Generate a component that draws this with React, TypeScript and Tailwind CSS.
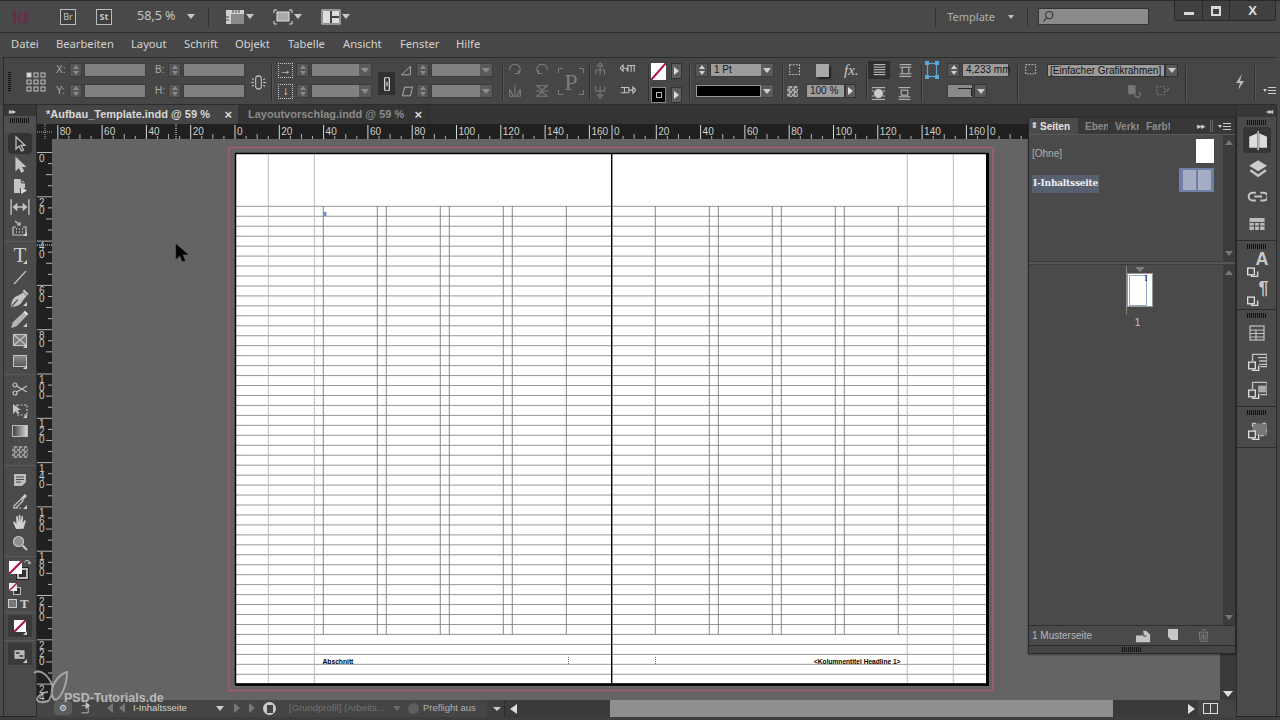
import React from 'react';

const mm = 2.215;
const hLines = Array.from({ length: 48 }, (_, i) => 206.3 + i * 9.957);
const colsLeft = [323.3, 377.3, 386.3, 440.3, 449.3, 503.3, 512.3, 566.3];
const colsRight = [655.3, 709.3, 718.3, 772.3, 781.3, 835.3, 844.3, 898.3];
const guides = [268.3, 314.3, 907.3, 953.3];

type IconProps = { children: React.ReactNode; size?: number; className?: string };

function Ico({ children, size = 18, className = '' }: IconProps) {
  return (
    <svg width={size} height={size} viewBox="0 0 18 18" fill="none" stroke="#c4c4c4" strokeWidth="1.2" className={className}>
      {children}
    </svg>
  );
}

function Grip({ w = 'w-[20px]' }: { w?: string }) {
  return <div className={`${w} h-[5px] bg-[repeating-linear-gradient(90deg,#111_0,#111_1px,transparent_1px,transparent_2px)]`} />;
}

function Corner() {
  return <span className="absolute right-[5px] bottom-[2px] w-0 h-0 border-l-[4px] border-l-transparent border-b-[4px] border-b-[#cfcfcf]" />;
}

function Tool({ children, fly, active }: { children: React.ReactNode; fly?: boolean; active?: boolean }) {
  return (
    <div className={`relative h-[21px] w-[24px] mx-auto flex items-center justify-center ${active ? 'bg-[#333] rounded-sm' : ''}`}>
      {children}
      {fly && <Corner />}
    </div>
  );
}

function Sep({ h = 'h-[7px]' }: { h?: string }) {
  return (
    <div className={`${h} flex items-center`}>
      <div className="w-full h-px bg-[#2f2f2f] border-b border-b-[#5a5a5a]" />
    </div>
  );
}

function Spin({ dim }: { dim?: boolean }) {
  const c = dim ? '#8a8a8a' : '#d0d0d0';
  return (
    <div className="w-[13px] h-[14px] bg-[#565656] border border-[#3a3a3a] flex flex-col items-center justify-center gap-[2px] shrink-0">
      <span className="w-0 h-0 border-x-[3px] border-x-transparent border-b-[4px]" style={{ borderBottomColor: c }} />
      <span className="w-0 h-0 border-x-[3px] border-x-transparent border-t-[4px]" style={{ borderTopColor: c }} />
    </div>
  );
}

function Field({ w, drop, text, lit }: { w: string; drop?: boolean; text?: string; lit?: boolean }) {
  return (
    <div className={`${w} h-[14px] ${lit ? 'bg-[#9c9c9c]' : 'bg-[#808080]'} border border-[#3c3c3c] flex items-center relative shrink-0`}>
      {text && <span className="pl-[3px] text-[10px] leading-none text-[#161616] whitespace-nowrap">{text}</span>}
      {drop && (
        <span className="absolute right-0 top-0 h-full w-[12px] bg-[#5a5a5a] flex items-center justify-center">
          <span className={`w-0 h-0 border-x-[4px] border-x-transparent border-t-[5px] ${lit ? 'border-t-[#d0d0d0]' : 'border-t-[#8c8c8c]'}`} />
        </span>
      )}
    </div>
  );
}

function VBar() {
  return <div className="w-px h-[36px] bg-[#2f2f2f] border-r border-r-[#565656] box-content shrink-0" />;
}

function RulerH() {
  const origins = [
    { x: 235, from: -80, to: 165 },
    { x: 612, from: 0, to: 165 },
    { x: 988, from: 0, to: 110 },
  ];
  const items: React.ReactNode[] = [];
  origins.forEach((o) => {
    for (let m = o.from; m <= o.to; m += 5) {
      const x = o.x + m * mm - 52;
      if (x < 0) continue;
      const major = m % 20 === 0;
      const mid = m % 10 === 0;
      items.push(
        <line key={`${o.x}-${m}`} x1={x} x2={x} y1={major ? 1 : mid ? 10 : 12} y2={15} stroke={major ? '#d8d8d8' : '#b0b0b0'} strokeWidth="1" />
      );
      if (major) {
        items.push(
          <text key={`${o.x}-t${m}`} x={x + 2} y={10.5} fontSize="10" fontFamily="'Liberation Sans', sans-serif" fill="#cfcfc4">
            {Math.abs(m)}
          </text>
        );
      }
    }
  });
  return (
    <svg width="1184" height="15" className="block bg-[#202020]">
      {items}
      <line x1="124" x2="124" y1="0" y2="15" stroke="#eee" strokeDasharray="1 1" />
    </svg>
  );
}

function RulerV() {
  const items: React.ReactNode[] = [];
  for (let m = 0; m <= 240; m += 5) {
    const y = 13.5 + m * mm;
    const major = m % 20 === 0;
    const mid = m % 10 === 0;
    items.push(<line key={m} x1={major ? 0 : mid ? 9 : 11} x2={15} y1={y} y2={y} stroke="#b8b8b8" strokeWidth="1" />);
    if (major) {
      String(m).split('').forEach((d, i) => {
        items.push(
          <text key={`${m}-${i}`} x={2} y={y + 9 + i * 8} fontSize="10" fontFamily="'Liberation Sans', sans-serif" fill={i === String(m).length - 1 ? '#ccd2b4' : '#c8c8d4'}>
            {d}
          </text>
        );
      });
    }
  }
  return (
    <svg width="15" height="561" className="block bg-[#202020] shrink-0">
      {items}
      <line x1="0" x2="15" y1="106" y2="106" stroke="#eee" strokeDasharray="1 1" />
    </svg>
  );
}

function Spread() {
  const ox = 228;
  const oy = 146;
  return (
    <svg width="770" height="548" viewBox={`${ox} ${oy} 770 548`} className="block">
      <rect x="229" y="147.5" width="764" height="543" fill="none" stroke="#a45a75" strokeWidth="1.6" />
      <rect x="235.5" y="153.5" width="752" height="531" fill="#fff" />
      {hLines.map((y) => (
        <line key={y} x1="236" x2="987" y1={y} y2={y} stroke="#8a8a8a" strokeWidth="0.9" />
      ))}
      {guides.map((x) => (
        <line key={x} x1={x} x2={x} y1="154" y2="684" stroke="#b6b6b6" strokeWidth="0.9" />
      ))}
      {[...colsLeft, ...colsRight].map((x) => (
        <line key={x} x1={x} x2={x} y1="206" y2="634.5" stroke="#7c7c7c" strokeWidth="0.9" />
      ))}
      <rect x="323" y="212" width="3.4" height="4" fill="#6f8fcf" />
      <rect x="235.5" y="153.5" width="752" height="531" fill="none" stroke="#000" strokeWidth="1.5" />
      <line x1="987.5" x2="987.5" y1="153" y2="686" stroke="#000" strokeWidth="3" />
      <line x1="235" x2="989" y1="684.5" y2="684.5" stroke="#000" strokeWidth="2.6" />
      <line x1="611.7" x2="611.7" y1="153" y2="685" stroke="#000" strokeWidth="1.4" />
      <line x1="568.5" x2="568.5" y1="657" y2="664" stroke="#777" strokeDasharray="1 1" />
      <line x1="655.5" x2="655.5" y1="657" y2="664" stroke="#777" strokeDasharray="1 1" />
      <text x="322.5" y="664" fontSize="6.7" fontWeight="700" fontFamily="'Liberation Sans', sans-serif" fill="#000">Abschnitt</text>
      <text x="814" y="664" fontSize="6.6" fontWeight="700" fontFamily="'Liberation Sans', sans-serif" fill="#000">&lt;Kolumnentitel Headline 1&gt;</text>
    </svg>
  );
}

function ToolPanel() {
  return (
    <div className="w-[37px] shrink-0 flex">
      <div className="w-[3px] bg-[#4c4c4c]" />
      <div className="w-[33px] border-l border-r border-[#2c2c2c] bg-[#4a4a4a] flex flex-col box-content">
        <div className="h-[11px] bg-[#383838] flex items-center pl-[5px]">
          <span className="text-[8px] leading-none text-[#ccc] tracking-[-1px]">▸▸</span>
        </div>
        <div className="h-[17px] flex justify-center pt-[2px] bg-[#4f4f4f]"><Grip /></div>
        <Tool active>
          <Ico><path d="M5 2v12l3-3 2.5 5 2-1-2.5-4.6H14z" /></Ico>
        </Tool>
        <Tool>
          <Ico><path d="M5 2v12l3-3 2.5 5 2-1-2.5-4.6H14z" fill="#c4c4c4" /></Ico>
        </Tool>
        <Tool>
          <Ico><path d="M3 2h7l4 4v5H9v5H3z" fill="#c4c4c4" stroke="none" /><path d="M10 2l1 4h3" stroke="#4a4a4a" /><path d="M10 10l6 3.5-6 3.5z" fill="#ddd" stroke="none" /></Ico>
        </Tool>
        <Tool>
          <Ico size={20}><path d="M1 2v14M17 2v14M4 9h10" /><path d="M6 6.5L3.2 9 6 11.5zM12 6.5L14.8 9 12 11.5z" fill="#c4c4c4" /></Ico>
        </Tool>
        <Tool fly>
          <Ico><path d="M2 8v8h13V8h-3M2 8h3" /><path d="M4 2l5 4M9 3v3H6" /><path d="M5 10h1M8 10h1M11 10h1M5 13h1M8 13h1M11 13h1" strokeWidth="1.6" /></Ico>
        </Tool>
        <Sep />
        <Tool fly><span className="font-['Liberation_Serif',serif] text-[21px] leading-none text-[#cfcfcf]">T</span></Tool>
        <Tool><Ico><path d="M3 16L15 3" /></Ico></Tool>
        <Tool fly>
          <Ico size={20}><path d="M1 17c0-5 2-9 6-10l5-3 3 3-4 5c-1 3-5 5-10 5z" fill="#c4c4c4" stroke="none" /><path d="M12 2l4 4" strokeWidth="2" /><path d="M1.5 16.5L7 10.5" stroke="#4a4a4a" /></Ico>
        </Tool>
        <Tool fly>
          <Ico size={20}><path d="M1 17l1.5-5L12 3l3 3-9 9.5z" fill="#b4b4b4" stroke="none" /><path d="M12 3l3 3 1.5-1.5L13.5 1.5z" fill="#e8e8e8" stroke="none" /></Ico>
        </Tool>
        <Tool fly><Ico><rect x="2.5" y="3.5" width="13" height="11" fill="#777" /><path d="M2.5 3.5l13 11M15.5 3.5l-13 11" /></Ico></Tool>
        <Tool fly><div className="w-[14px] h-[12px] border border-[#c4c4c4] bg-gradient-to-b from-[#8a8a8a] to-[#5c5c5c]" /></Tool>
        <Sep />
        <Tool>
          <Ico><circle cx="4" cy="5" r="2" /><circle cx="4" cy="13" r="2" /><path d="M5.5 6L16 12M5.5 12L16 6" /></Ico>
        </Tool>
        <Tool fly>
          <Ico><path d="M2 3v10l3-3 2 3 1.5-1-2-3H10z" fill="#c4c4c4" stroke="none" /><rect x="6" y="4" width="10" height="10" strokeDasharray="2 1.5" /></Ico>
        </Tool>
        <Tool><div className="w-[16px] h-[12px] border border-[#bbb] bg-gradient-to-r from-[#444] to-[#d8d8d8]" /></Tool>
        <Tool>
          <div className="w-[16px] h-[12px] bg-[repeating-conic-gradient(#999_0_25%,#5a5a5a_0_50%)] bg-[length:5px_5px]" />
        </Tool>
        <Sep />
        <Tool>
          <Ico><path d="M3 3h12v8l-4 4H3z" fill="#bdbdbd" stroke="none" /><path d="M5 6h8M5 8.5h8M5 11h5" stroke="#4a4a4a" /></Ico>
        </Tool>
        <Tool fly>
          <Ico><path d="M3 14l7-7 2 2-7 7H3z" /><path d="M10 6l4-4 2 2-4 4z" fill="#ccc" stroke="none" /><path d="M2 16h9" strokeDasharray="2 1" /></Ico>
        </Tool>
        <Tool>
          <Ico><path d="M5 16L2 9l1.2-.8L5.5 11 5 3.5 6.5 3l1 6 .3-7h1.5l.3 7 1-6 1.5.5-.5 6.5 2-3 1.2.8-2.3 8z" fill="#d0d0d0" stroke="none" /></Ico>
        </Tool>
        <Tool>
          <Ico><circle cx="7.5" cy="7.5" r="5" fill="#8e8e8e" /><path d="M11.5 11.5L16 16" strokeWidth="2.4" /></Ico>
        </Tool>
        <Sep />
        <div className="relative h-[22px]">
          <div className="absolute left-[13px] top-[8px] w-[11px] h-[11px] border-2 border-[#bbb] bg-[#333] outline outline-1 outline-[#222]" />
          <svg width="13" height="13" viewBox="0 0 13 13" className="absolute left-[5px] top-[1px]"><rect width="13" height="13" fill="#fff" /><path d="M0 13L13 0" stroke="#b01040" strokeWidth="2" /></svg>
          <span className="absolute left-[20px] top-[-2px] text-[9px] leading-none text-[#ccc]">↷</span>
        </div>
        <div className="relative h-[14px]">
          <div className="absolute left-[9px] top-[5px] w-[8px] h-[8px] border border-[#bbb] bg-[#333]" />
          <svg width="8" height="8" viewBox="0 0 8 8" className="absolute left-[5px] top-[1px]"><rect width="8" height="8" fill="#eee" /><path d="M0 8L8 0" stroke="#b01040" strokeWidth="1.4" /></svg>
        </div>
        <div className="h-[14px] flex items-center pl-[4px] gap-[3px]">
          <div className="w-[9px] h-[9px] border border-[#ccc] bg-[#777]" />
          <span className="font-['Liberation_Serif',serif] font-bold text-[13px] leading-none text-[#d0d0d0]">T</span>
        </div>
        <Sep h="h-[5px]" />
        <div className="relative h-[22px] w-[24px] mx-auto bg-[#3a3a3a] flex items-center justify-center">
          <svg width="12" height="12" viewBox="0 0 12 12"><rect width="12" height="12" fill="#fff" /><path d="M0 12L12 0" stroke="#b01040" strokeWidth="2" /></svg>
          <Corner />
        </div>
        <Sep h="h-[6px]" />
        <div className="relative h-[22px] w-[24px] mx-auto bg-[#3a3a3a] flex items-center justify-center">
          <Ico size={13}><rect x="2" y="3" width="14" height="12" fill="#bbb" stroke="none" /><path d="M4 7h5M9 11h5" stroke="#333" strokeWidth="2" /></Ico>
          <Corner />
        </div>
      </div>
    </div>
  );
}

function DockIcon({ children, active }: { children: React.ReactNode; active?: boolean }) {
  return (
    <div className={`h-[26px] w-[28px] mx-auto flex items-center justify-center ${active ? 'bg-[#363636] rounded-[3px]' : ''}`}>
      {children}
    </div>
  );
}

function Dup({ children }: { children: React.ReactNode }) {
  return (
    <Ico size={20}>
      {children}
      <rect x="1.5" y="10" width="6" height="6" stroke="#ddd" fill="#4a4a4a" />
      <path d="M5 16.5v1h5.5V13" stroke="#ddd" />
    </Ico>
  );
}

function Dock() {
  return (
    <div className="w-[39px] shrink-0 bg-[#4a4a4a] border-l border-l-[#2c2c2c] border-r border-r-[#2c2c2c] box-content mr-[3px] flex flex-col">
      <div className="h-[12px] bg-[#383838] flex items-center justify-end pr-[4px]">
        <span className="text-[8px] leading-none text-[#ccc] tracking-[-1px]">◂◂</span>
      </div>
      <div className="pt-[3px] h-[124px] border-b border-b-[#2c2c2c]">
        <div className="flex justify-center"><Grip /></div>
        <div className="mt-[2px] flex flex-col gap-[2px]">
          <DockIcon active>
            <Ico size={20}><path d="M2 6l7-3v13H2zM18 6l-7-3v13h7z" fill="#ddd" stroke="none" /><path d="M10 1v17" stroke="#ddd" /></Ico>
          </DockIcon>
          <DockIcon>
            <Ico size={20}><path d="M10 2l8 5-8 5-8-5z" fill="#ccc" stroke="none" /><path d="M3 11l7 5 7-5" strokeWidth="2.2" /></Ico>
          </DockIcon>
          <DockIcon>
            <Ico size={20}><path d="M8 6H5a3.5 3.5 0 000 7h3M12 6h3a3.5 3.5 0 010 7h-3M6.5 9.5h7" strokeWidth="1.8" /></Ico>
          </DockIcon>
          <DockIcon>
            <Ico size={18}><rect x="1.5" y="3" width="15" height="12" fill="#bbb" stroke="none" /><path d="M1.5 7.5h15M1.5 11h15M6.5 7v8M11.5 7v8" stroke="#4a4a4a" /></Ico>
          </DockIcon>
        </div>
      </div>
      <div className="pt-[3px] h-[69px] border-b border-b-[#2c2c2c]">
        <div className="flex justify-center"><Grip /></div>
        <div className="mt-[1px] flex flex-col gap-[3px]">
          <DockIcon>
            <div className="relative w-[22px] h-[24px]">
              <div className="absolute left-0 bottom-[-2px]"><Dup><path d="" /></Dup></div>
              <span className="absolute right-[-1px] top-[-1px] text-[18px] font-bold leading-none text-[#c8c8c8] font-['Liberation_Sans',sans-serif]">A</span>
            </div>
          </DockIcon>
          <DockIcon>
            <div className="relative w-[22px] h-[24px]">
              <div className="absolute left-0 bottom-[-2px]"><Dup><path d="" /></Dup></div>
              <span className="absolute right-[-1px] top-[-1px] text-[18px] font-bold leading-none text-[#c8c8c8] font-['Liberation_Sans',sans-serif]">¶</span>
            </div>
          </DockIcon>
        </div>
      </div>
      <div className="pt-[3px] h-[97px] border-b border-b-[#2c2c2c]">
        <div className="flex justify-center"><Grip /></div>
        <div className="mt-[2px] flex flex-col gap-[2px]">
          <DockIcon>
            <Ico size={18}><rect x="2" y="2" width="14" height="14" /><path d="M2 6h14M2 9.5h14M2 13h14M8 6v10" /></Ico>
          </DockIcon>
          <DockIcon>
            <Dup><path d="M5 9V3h13v11h-6M10 6h8M11 9h7M11 12h7" /></Dup>
          </DockIcon>
          <DockIcon>
            <Dup><path d="M5 9V3h13v11h-6" /><rect x="10" y="6" width="7" height="6" fill="#aaa" stroke="none" /></Dup>
          </DockIcon>
        </div>
      </div>
      <div className="pt-[3px] h-[41px] border-b border-b-[#2c2c2c]">
        <div className="flex justify-center"><Grip /></div>
        <div className="mt-[2px]">
          <DockIcon>
            <Dup><rect x="5" y="3" width="13" height="11" fill="#777" strokeDasharray="3 6" /></Dup>
          </DockIcon>
        </div>
      </div>
    </div>
  );
}

function ScrollCol({ up, down, className }: { up?: boolean; down?: boolean; className?: string }) {
  return (
    <div className={`w-[12px] bg-[#3c3c3c] flex flex-col items-center justify-between py-[5px] shrink-0 ${className ?? ''}`}>
      {up ? <span className="w-0 h-0 border-x-[4px] border-x-transparent border-b-[5px] border-b-[#777]" /> : <span />}
      {down ? <span className="w-0 h-0 border-x-[4px] border-x-transparent border-t-[5px] border-t-[#777]" /> : <span />}
    </div>
  );
}

function PagesPanel() {
  return (
    <div className="absolute left-[1028px] top-[117px] w-[208px] h-[537px] bg-[#4a4a4a] border border-[#2a2a2a] flex flex-col shadow-[0_1px_2px_#0006] font-['Liberation_Sans',sans-serif]">
      <div className="h-[17px] bg-[#383838] flex items-stretch text-[10px] border-b border-b-[#5a5a5a] shrink-0">
        <div className="w-[49px] bg-[#4a4a4a] flex items-center pl-[2px] gap-[2px] font-bold text-[#e4e4e4]">
          <span className="text-[8px] leading-none">⇕</span>Seiten
        </div>
        <div className="w-[31px] flex items-center pl-[7px] text-[#8c8c8c] border-r border-r-[#2f2f2f] font-bold overflow-hidden whitespace-nowrap">Ebene</div>
        <div className="w-[31px] flex items-center pl-[6px] text-[#8c8c8c] border-r border-r-[#2f2f2f] font-bold overflow-hidden whitespace-nowrap">Verkn</div>
        <div className="w-[31px] flex items-center pl-[6px] text-[#8c8c8c] border-r border-r-[#2f2f2f] font-bold overflow-hidden whitespace-nowrap">Farbf</div>
        <div className="flex-1 flex items-center justify-end pr-[4px] gap-[5px] text-[#ccc]">
          <span className="text-[9px] leading-none tracking-[-1px]">▸▸</span>
          <span className="w-[3px] h-[12px] border-x border-x-[#666]" />
          <div className="flex items-center gap-[1px]">
            <span className="w-0 h-0 border-x-[2px] border-x-transparent border-t-[3px] border-t-[#ccc]" />
            <span className="w-[8px] h-[7px] border-y border-y-[#ccc] bg-[linear-gradient(#ccc,#ccc)] bg-[length:100%_1px] bg-center bg-no-repeat" />
          </div>
        </div>
      </div>
      <div className="h-[126px] flex shrink-0">
        <div className="flex-1 relative text-[10px]">
          <div className="flex items-start justify-between pl-[3px] pr-[9px] pt-[4px]">
            <span className="mt-[7px] text-[#b0b0b0]">[Ohne]</span>
            <div className="w-[18px] h-[24px] bg-white" />
          </div>
          <div className="flex items-start justify-between pl-[3px] pr-[9px] mt-[5px]">
            <span className="mt-[7px] px-px py-[2px] bg-[#56606f] font-bold text-[#eef0f4] font-['DejaVu_Serif',serif] text-[9px] tracking-[-.2px]">I-Inhaltsseite</span>
            <div className="w-[35px] h-[24px] bg-[#6f7ea6] flex items-center justify-center gap-[2px]">
              <div className="w-[13px] h-[20px] bg-[#a5adc4]" />
              <div className="w-[13px] h-[20px] bg-[#a5adc4]" />
            </div>
          </div>
        </div>
        <ScrollCol up down />
      </div>
      <div className="h-[4px] bg-[#555] border-y border-y-[#3c3c3c] shrink-0" />
      <div className="flex-1 flex min-h-0">
        <div className="flex-1 flex flex-col items-center pt-[2px] pl-[23px] text-[10px] text-[#c8c8c8]">
          <span className="w-0 h-0 border-x-[5px] border-x-transparent border-t-[5px] border-t-[#7e7e7e] mr-[-4px]" />
          <div className="relative mt-[1px] ml-[4px] w-[26px] h-[34px] bg-white border border-[#999]">
            <div className="w-[18px] h-[31px] ml-px mt-px border border-[#8fa8cc]" />
            <span className="absolute right-[4px] top-0 text-[9px] leading-none text-black font-['Liberation_Serif',serif]">I</span>
            <div className="absolute left-[-2px] top-[-8px] h-[48px] w-px bg-[#888]" />
          </div>
          <span className="mt-[8px]">1</span>
        </div>
        <ScrollCol up down />
      </div>
      <div className="h-[21px] border-t border-t-[#303030] border-b border-b-[#2a2a2a] bg-[#4a4a4a] flex items-center pl-[3px] text-[10px] text-[#b8b8b8] shrink-0 relative">
        <span>1 Musterseite</span>
        <div className="absolute left-[106px] top-[2px]">
          <Ico size={17}><path d="M1 8h7V3h4l4 4v8H1z" fill="#c4c4c4" stroke="none" /><path d="M8 3l1 5 3 1" stroke="#4a4a4a" /></Ico>
        </div>
        <div className="absolute left-[139px] top-[3px] w-[10px] h-[11px] bg-[#c8c8c8] [clip-path:polygon(0_0,100%_0,100%_100%,30%_100%,0_70%)]" />
        <div className="absolute left-[167px] top-[2px]">
          <Ico size={15}><path d="M3 5h12M7 2h4M4 5l1 11h8l1-11M7 7v7M9 7v7M11 7v7" stroke="#888" strokeWidth="1" /></Ico>
        </div>
        <div className="absolute right-[2px] bottom-[1px] w-[9px] h-[9px] bg-[radial-gradient(#111_40%,transparent_45%)] bg-[length:2px_2px] [clip-path:polygon(100%_0,100%_100%,0_100%)]" />
      </div>
      <div className="h-[7px] flex justify-center items-center bg-[#454545] shrink-0"><Grip /></div>
    </div>
  );
}

function StatusBar() {
  const tri = 'w-0 h-0 border-y-[5px] border-y-transparent';
  return (
    <div className="h-[17px] flex items-center bg-[#3e3e3e] text-[9.5px] font-['Liberation_Sans',sans-serif] shrink-0 relative">
      <div className="w-[450px] h-full flex items-center relative bg-[#454545]">
        <div className="absolute left-[17px] top-[1px] w-[18px] h-[14px] bg-[#5c5c5c] rounded-sm flex items-center justify-center text-[9px] leading-none text-[#ddd]">⚙</div>
        <div className="absolute left-[44px] top-[2px]"><Ico size={13}><path d="M1 5h9v10H1" /><path d="M7 9l5-4-5-4z" fill="#c4c4c4" /></Ico></div>
        <span className={`absolute left-[70px] top-[3px] ${tri} border-r-[6px] border-r-[#777]`} />
        <span className={`absolute left-[82px] top-[3px] ${tri} border-r-[6px] border-r-[#777]`} />
        <span className="absolute left-[96px] text-[#d0d0d0]">I-Inhaltsseite</span>
        <span className="absolute left-[179px] top-[6px] w-0 h-0 border-x-[4px] border-x-transparent border-t-[5px] border-t-[#ccc]" />
        <span className={`absolute left-[197px] top-[3px] ${tri} border-l-[6px] border-l-[#777]`} />
        <span className={`absolute left-[212px] top-[3px] ${tri} border-l-[6px] border-l-[#777]`} />
        <div className="absolute left-[226px] top-[2px] w-[13px] h-[13px] rounded-full bg-[#ccc] flex items-center justify-center">
          <span className="w-[6px] h-[8px] bg-[#444]" />
        </div>
        <span className="absolute left-[252px] text-[#737373]">[Grundprofil] (Arbeits...</span>
        <span className="absolute left-[356px] top-[6px] w-0 h-0 border-x-[4px] border-x-transparent border-t-[5px] border-t-[#6a6a6a]" />
        <div className="absolute left-[371px] top-[3px] w-[11px] h-[11px] rounded-full bg-[#5e5e5e]" />
        <span className="absolute left-[386px] text-[#b0b0b0]">Preflight aus</span>
        <span className="absolute left-[456px] top-[7px] w-0 h-0 border-x-[4px] border-x-transparent border-t-[4px] border-t-[#ccc]" />
      </div>
      <div className="w-[106px] h-full bg-[#3a3a3a] flex items-center pl-[5px] border-l border-l-[#2c2c2c] ml-[17px]">
        <span className={`${tri} border-r-[7px] border-r-[#ddd]`} />
      </div>
      <div className="w-[503px] h-full bg-[#8f8f8f]" />
      <div className="w-[85px] h-full bg-[#3a3a3a] flex items-center justify-end pr-[3px]">
        <span className={`${tri} border-l-[7px] border-l-[#ddd]`} />
      </div>
      <div className="flex-1 h-full flex items-center pl-[5px] gap-[6px] bg-[#444]">
        <div className="w-[15px] h-[11px] border border-[#ddd] bg-[linear-gradient(#ddd,#ddd)] bg-[length:1px_100%] bg-center bg-no-repeat" />
        <div className="w-[9px] h-[9px] bg-[radial-gradient(#aaa_40%,transparent_45%)] bg-[length:2px_2px] [clip-path:polygon(100%_0,100%_100%,0_100%)]" />
      </div>
    </div>
  );
}

function TitleBar() {
  const viewIcon = (child: React.ReactNode, ml: string) => (
    <div className={`${ml} flex items-center gap-[1px] shrink-0`}>
      <svg width="20" height="16" viewBox="0 0 20 16" fill="none">{child}</svg>
      <span className="w-0 h-0 border-x-[4px] border-x-transparent border-t-[5px] border-t-[#c8c8c8]" />
    </div>
  );
  return (
    <div className="h-[33px] bg-[#494949] border-t border-t-[#2a2a2a] border-b border-b-[#2e2e2e] flex items-center relative font-['Noto_Sans',sans-serif] text-[#c4c4c4]">
      <span className="ml-[12px] w-[20px] text-[19px] font-bold leading-none text-[#6b2c4c] font-['Liberation_Sans',sans-serif]">Id</span>
      <span className="ml-[28px] w-[16px] h-[16px] border border-[#bdbdbd] bg-[#3e3e3e] flex items-center justify-center text-[9px] leading-none">Br</span>
      <span className="ml-[20px] w-[16px] h-[16px] border border-[#bdbdbd] bg-[#3e3e3e] flex items-center justify-center text-[9px] font-bold leading-none">St</span>
      <span className="ml-[25px] w-[41px] text-[12.5px] leading-none whitespace-nowrap">58,5 %</span>
      <span className="ml-[9px] w-0 h-0 border-x-[4px] border-x-transparent border-t-[5px] border-t-[#c8c8c8]" />
      <div className="ml-[13px] w-px h-[20px] bg-[#2f2f2f]" />
      {viewIcon(<><rect x="1" y="1" width="18" height="14" fill="#8a8a8a" /><path d="M1 1h18v4H6v10H1z" fill="#d0d0d0" /><path d="M8 1v3M11 1v3M14 1v3M1 8h3M1 11h3" stroke="#444" /></>, 'ml-[16px]')}
      {viewIcon(<><rect x="4" y="3" width="12" height="9" fill="#aaa" stroke="#ddd" /><path d="M1 4V1h3M16 1h3v3M19 12v3h-3M4 15H1v-3" stroke="#ddd" /></>, 'ml-[19px]')}
      {viewIcon(<><rect x="1" y="1" width="18" height="14" fill="#444" stroke="#ddd" /><rect x="2" y="2" width="7" height="12" fill="#ddd" /><rect x="11" y="2" width="7" height="5" fill="#ddd" /><rect x="11" y="9" width="7" height="5" fill="#ddd" /></>, 'ml-[19px]')}
      <div className="ml-auto flex items-center h-full">
        <div className="w-px h-[20px] bg-[#2f2f2f]" />
        <span className="ml-[11px] text-[11px] leading-none text-[#b0b0b0]">Template</span>
        <span className="ml-[13px] w-0 h-0 border-x-[3px] border-x-transparent border-t-[4px] border-t-[#c0c0c0]" />
        <div className="ml-[13px] w-px h-[20px] bg-[#2f2f2f]" />
        <div className="ml-[10px] w-[111px] h-[17px] bg-[#8a8a8a] border border-[#333] flex items-center pl-[3px]">
          <Ico size={13} className="shrink-0"><circle cx="10" cy="7" r="5" stroke="#333" strokeWidth="1.5" /><path d="M6 11l-4 5" stroke="#333" strokeWidth="1.5" /></Ico>
        </div>
        <div className="ml-[25px] mr-[4px] self-start w-[102px] h-[20px] bg-[#404040] border border-t-0 border-[#2a2a2a] rounded-b-[3px] flex">
          <div className="w-[28px] flex items-center justify-center border-r border-r-[#2a2a2a]"><span className="mt-[5px] w-[10px] h-[3px] bg-[#d8d8d8]" /></div>
          <div className="w-[27px] flex items-center justify-center border-r border-r-[#2a2a2a]"><span className="w-[10px] h-[10px] border-2 border-[#d8d8d8] border-t-[3px]" /></div>
          <div className="flex-1 flex items-center justify-center text-[13px] font-bold leading-none text-[#e0e0e0] font-['Liberation_Sans',sans-serif]">X</div>
        </div>
      </div>
    </div>
  );
}

function MenuBar() {
  const menu: [string, string][] = [
    ['Datei', 'w-[45px]'], ['Bearbeiten', 'w-[75px]'], ['Layout', 'w-[53px]'], ['Schrift', 'w-[51px]'], ['Objekt', 'w-[53px]'],
    ['Tabelle', 'w-[55px]'], ['Ansicht', 'w-[57px]'], ['Fenster', 'w-[56px]'], ['Hilfe', 'w-[40px]'],
  ];
  return (
    <div className="h-[24px] bg-[#474747] flex items-center pl-[11px] pb-[2px] text-[11.2px] text-[#d2d2d2] font-['Noto_Sans',sans-serif]">
      {menu.map(([m, w]) => (
        <span key={m} className={`${w} whitespace-nowrap`}>{m}</span>
      ))}
    </div>
  );
}

function Label({ children }: { children: React.ReactNode }) {
  return <span className="w-[13px] text-[10px] leading-[14px] text-[#aaa] shrink-0">{children}</span>;
}

function Col({ children, className = '' }: { children: React.ReactNode; className?: string }) {
  return <div className={`flex flex-col gap-[7px] shrink-0 ${className}`}>{children}</div>;
}

function Row({ children, className = '' }: { children: React.ReactNode; className?: string }) {
  return <div className={`flex items-center h-[14px] ${className}`}>{children}</div>;
}

function ControlPanel() {
  const dim = '#7c7c7c';
  const lit = '#c4c4c4';
  return (
    <div className="h-[48px] ml-[3px] mr-[3px] bg-[#464646] border-t border-t-[#2c2c2c] border-l border-l-[#2c2c2c] border-b border-b-[#2c2c2c] flex pt-[5px] font-['Liberation_Sans',sans-serif] relative">
      <div className="ml-[4px] mt-[9px] w-[3px] h-[20px] bg-[repeating-linear-gradient(#111_0,#111_1px,transparent_1px,transparent_2px)] shrink-0" />
      <svg width="20" height="20" viewBox="0 0 20 20" fill="none" stroke="#c4c4c4" className="ml-[15px] mt-[9px] shrink-0">
        {[1, 8, 15].flatMap((x) => [1, 8, 15].map((y) => (
          <rect key={`${x}${y}`} x={x} y={y} width="4" height="4" fill={x === 1 && y === 1 ? '#ddd' : 'none'} />
        )))}
      </svg>
      <Col className="ml-[10px]">
        <Row><Label>X:</Label><Spin dim /><div className="w-[2px]" /><Field w="w-[62px]" /></Row>
        <Row><Label>Y:</Label><Spin dim /><div className="w-[2px]" /><Field w="w-[62px]" /></Row>
      </Col>
      <Col className="ml-[9px]">
        <Row><Label>B:</Label><Spin dim /><div className="w-[2px]" /><Field w="w-[62px]" /></Row>
        <Row><Label>H:</Label><Spin dim /><div className="w-[2px]" /><Field w="w-[62px]" /></Row>
      </Col>
      <Ico size={17} className="ml-[5px] mt-[11px] shrink-0">
        <path d="M6 5a3 3 0 016 0v8a3 3 0 01-6 0zM2 5l2 1M2 13l2-1M16 5l-2 1M16 13l-2-1M1 9h3M14 9h3" strokeWidth="1.1" />
      </Ico>
      <div className="ml-[4px] mt-[2px]"><VBar /></div>
      <Col className="ml-[5px]">
        <Row>
          <div className="w-[15px] h-[15px] border border-dotted border-[#ccc] flex items-center justify-center text-[12px] font-bold leading-none text-[#ddd]">→</div>
          <div className="w-[3px]" /><Spin dim /><div className="w-[2px]" /><Field w="w-[61px]" drop />
        </Row>
        <Row>
          <div className="w-[15px] h-[15px] border border-dotted border-[#ccc] flex items-center justify-center text-[12px] font-bold leading-none text-[#ddd]">↓</div>
          <div className="w-[3px]" /><Spin dim /><div className="w-[2px]" /><Field w="w-[61px]" drop />
        </Row>
      </Col>
      <div className="ml-[6px] mt-[9px] w-[17px] h-[23px] bg-[#2f2f2f] flex items-center justify-center shrink-0">
        <Ico size={14}><path d="M6 3a3 3 0 016 0v12a3 3 0 01-6 0zM9 6v6" stroke="#ddd" strokeWidth="1.6" /></Ico>
      </div>
      <Col className="ml-[6px]">
        <Row>
          <Ico size={13} className="shrink-0"><path d="M1 15L13 3v12z" stroke="#bbb" /></Ico>
          <div className="w-[2px]" /><Spin dim /><div className="w-[2px]" /><Field w="w-[62px]" drop />
        </Row>
        <Row>
          <Ico size={13} className="shrink-0"><path d="M5 3h11l-3 12H2z" stroke="#bbb" /></Ico>
          <div className="w-[2px]" /><Spin dim /><div className="w-[2px]" /><Field w="w-[62px]" drop />
        </Row>
      </Col>
      <div className="ml-[9px] mt-[2px]"><VBar /></div>
      <Col className="ml-[3px] w-[51px]">
        <Row className="gap-[11px]">
          <Ico size={16} className="shrink-0"><path d="M3 9a6 6 0 1110 4" stroke={dim} /><path d="M13 9v4h-4" stroke={dim} /></Ico>
          <Ico size={16} className="shrink-0"><path d="M15 9a6 6 0 10-10 4" stroke={dim} /><path d="M5 9v4h4" stroke={dim} /></Ico>
        </Row>
        <Row className="gap-[11px]">
          <Ico size={16} className="shrink-0"><path d="M9 2v14M3 15V7l4 8zM15 15V7l-4 8z" stroke={dim} /></Ico>
          <Ico size={16} className="shrink-0"><path d="M2 9h14M3 3h12L9 8zM3 15h12L9 10z" stroke={dim} /></Ico>
        </Row>
      </Col>
      <div className="mt-[5px] relative w-[26px] h-[27px] flex items-center justify-center font-['Liberation_Serif',serif] text-[24px] leading-none text-[#7c7c7c] shrink-0">
        <svg width="26" height="27" viewBox="0 0 26 27" fill="none" stroke="#7c7c7c" className="absolute inset-0">
          <path d="M.5 5V.5H5M21 .5h4.5V5M25.5 22v4.5H21M5 26.5H.5V22" />
        </svg>
        P
      </div>
      <div className="ml-[5px] mt-[2px]"><VBar /></div>
      <Col className="ml-[2px] w-[46px]">
        <Row className="gap-[11px]">
          <Ico size={16} className="shrink-0"><path d="M8 1L5 4.5h6zM8 5v4M3 9h10M3 9v5M8 9v5M13 9v5" stroke={dim} /></Ico>
          <Ico size={16} className="shrink-0"><path d="M0 7l3.5-3.5v7zM4 7h4M8 7v3M8 4h9M9 4v7M12.5 4v7M16 4v7" stroke={lit} /></Ico>
        </Row>
        <Row className="gap-[11px]">
          <Ico size={16} className="shrink-0"><path d="M8 17l-3-3.5h6zM8 13V9M3 9h10M3 4v5M8 4v5M13 4v5" stroke={dim} /></Ico>
          <Ico size={16} className="shrink-0"><path d="M18 8l-3.5-3.5v7zM14 8h-4M10 8V5M10 8v3M1 5h9M1 11h9M5 5v6" stroke={lit} /></Ico>
        </Row>
      </Col>
      <div className="ml-[9px] mt-[2px]"><VBar /></div>
      <Col className="ml-[1px]">
        <Row className="h-[18px] -mt-[1px]">
          <svg width="15" height="17" viewBox="0 0 15 17" className="shrink-0"><rect width="15" height="17" fill="#fff" /><path d="M0 17L15 0" stroke="#b01040" strokeWidth="2" /></svg>
          <div className="ml-[5px] w-[11px] h-[16px] bg-[#5e5e5e] border border-[#333] flex items-center justify-center"><span className="w-0 h-0 border-y-[4px] border-y-transparent border-l-[5px] border-l-[#ddd]" /></div>
        </Row>
        <Row className="h-[16px]">
          <div className="w-[15px] h-[16px] bg-black border border-[#888] flex items-center justify-center shrink-0"><span className="w-[6px] h-[6px] border border-[#bbb]" /></div>
          <div className="ml-[5px] w-[11px] h-[16px] bg-[#5e5e5e] border border-[#333] flex items-center justify-center"><span className="w-0 h-0 border-y-[4px] border-y-transparent border-l-[5px] border-l-[#ddd]" /></div>
        </Row>
      </Col>
      <div className="ml-[7px] mt-[2px]"><VBar /></div>
      <Col className="ml-[4px]">
        <Row>
          <Spin />
          <div className="w-[2px]" />
          <Field w="w-[64px]" drop text="1 Pt" lit />
        </Row>
        <Row>
          <div className="w-[79px] h-[14px] bg-[#9a9a9a] border border-[#3c3c3c] flex items-stretch relative">
            <div className="flex-1 m-[1px] mr-[13px] bg-black" />
            <span className="absolute right-0 top-0 h-full w-[12px] bg-[#5a5a5a] flex items-center justify-center"><span className="w-0 h-0 border-x-[4px] border-x-transparent border-t-[5px] border-t-[#ccc]" /></span>
          </div>
        </Row>
      </Col>
      <div className="ml-[8px] mt-[2px]"><VBar /></div>
      <Col className="ml-[3px] w-[72px]">
        <Row className="gap-[13px]">
          <Ico size={16} className="shrink-0"><rect x="3" y="3" width="11" height="11" strokeDasharray="2 1.5" /></Ico>
          <div className="w-[13px] h-[13px] bg-[#a8a8a8] shadow-[2px_2px_2px_#222] shrink-0" />
          <span className="ml-[2px] font-['Liberation_Serif',serif] italic text-[15px] leading-none text-[#ccc]">fx.</span>
        </Row>
        <Row>
          <div className="w-[11px] h-[11px] bg-[repeating-conic-gradient(#aaa_0_25%,#666_0_50%)] bg-[length:5px_5px] shrink-0" />
          <div className="ml-[8px] w-[39px] h-[14px] bg-[#9c9c9c] border border-[#3c3c3c] flex items-center pl-[3px] text-[10px] leading-none text-[#161616]">100 %</div>
          <div className="w-[11px] h-[14px] bg-[#5e5e5e] border border-[#333] flex items-center justify-center"><span className="w-0 h-0 border-y-[4px] border-y-transparent border-l-[5px] border-l-[#ddd]" /></div>
        </Row>
      </Col>
      <div className="ml-[7px] mt-[2px]"><VBar /></div>
      <Col className="w-[48px]">
        <Row className="gap-[8px] h-[18px] -mt-[2px]">
          <div className="w-[22px] h-[18px] bg-[#2f2f2f] flex items-center justify-center shrink-0">
            <Ico size={15}><path d="M2 2h14M2 5h14M2 8h14M2 11h14M2 14h14" stroke="#d0d0d0" /></Ico>
          </div>
          <Ico size={15} className="shrink-0"><path d="M2 2h14M2 16h14M2 5h2M14 5h2M2 13h2M14 13h2" /><rect x="5" y="5" width="8" height="8" /></Ico>
        </Row>
        <Row className="gap-[11px] pl-[3px]">
          <Ico size={15} className="shrink-0"><circle cx="9" cy="9" r="5" fill="#ccc" /><path d="M1 2h16M1 16h16M1 6h3M14 6h3M1 12h3M14 12h3" /></Ico>
          <Ico size={15} className="shrink-0"><path d="M2 2h14M2 16h14M2 13h14M5 5h8v6H5z" /></Ico>
        </Row>
      </Col>
      <div className="ml-[5px] mt-[2px]"><VBar /></div>
      <Col className="ml-[2px]">
        <Row>
          <svg width="14" height="18" viewBox="0 0 14 18" className="shrink-0"><rect x="2.5" y="2.5" width="9" height="13" fill="none" stroke="#5aa7d8" strokeWidth="1.2" /><path d="M0 0h4v4H0zM10 0h4v4h-4zM0 14h4v4H0zM10 14h4v4h-4z" fill="#5aa7d8" /></svg>
          <div className="w-[8px]" /><Spin /><div className="w-[2px]" />
          <Field w="w-[47px]" text="4,233 mm" lit />
        </Row>
        <Row className="pl-[22px]">
          <div className="w-[26px] h-[14px] bg-[#8a8a8a] border border-[#3c3c3c] flex justify-end items-start"><span className="mt-[3px] w-[14px] h-[8px] border-t border-r border-[#222]" /></div>
          <div className="ml-[1px] w-[13px] h-[14px] bg-[#5a5a5a] border border-[#333] flex items-center justify-center"><span className="w-0 h-0 border-x-[4px] border-x-transparent border-t-[5px] border-t-[#ccc]" /></div>
        </Row>
      </Col>
      <div className="ml-[8px] mt-[2px]"><VBar /></div>
      <div className="ml-[5px] w-[160px] shrink-0 relative">
        <div className="flex items-center h-[14px]">
          <Ico size={15} className="shrink-0"><rect x="2" y="2" width="12" height="11" strokeDasharray="2 1.5" /></Ico>
          <div className="ml-[8px] w-[118px] h-[13px] bg-[#9c9c9c] border border-[#333] text-[10px] leading-[11px] pl-[2px] text-[#111] whitespace-nowrap overflow-hidden">[Einfacher Grafikrahmen]</div>
          <div className="w-[13px] h-[13px] bg-[#5a5a5a] border border-[#333] flex items-center justify-center"><span className="w-0 h-0 border-x-[4px] border-x-transparent border-t-[5px] border-t-[#ccc]" /></div>
        </div>
        <div className="absolute left-[103px] top-[21px] flex gap-[12px]">
          <Ico size={16}><rect x="2" y="2" width="7" height="9" fill="#777" stroke="#777" /><path d="M9 12a3 3 0 104-3" stroke={dim} /></Ico>
          <Ico size={16}><rect x="2" y="3" width="9" height="9" strokeDasharray="2 1.5" stroke={dim} /><path d="M13 8l3-3" stroke={dim} /></Ico>
        </div>
      </div>
      <div className="ml-[1px] mt-[2px]"><VBar /></div>
      <Ico size={18} className="ml-[44px] mt-[10px] shrink-0"><path d="M11 1L5 10h4l-2 7 6-9H9z" fill="#bbb" stroke="none" /></Ico>
      <div className="ml-[5px] mt-[2px]"><VBar /></div>
      <div className="ml-[7px] mt-[13px] flex items-center gap-[1px] shrink-0">
        <span className="w-0 h-0 border-x-[2px] border-x-transparent border-t-[3px] border-t-[#ccc]" />
        <span className="w-[8px] h-[7px] border-y border-y-[#ccc] bg-[linear-gradient(#ccc,#ccc)] bg-[length:100%_1px] bg-center bg-no-repeat" />
      </div>
    </div>
  );
}

export default function App() {
  return (
    <div className="relative w-[1280px] h-[720px] overflow-hidden bg-[#464646] flex flex-col">
      <TitleBar />
      <MenuBar />
      <ControlPanel />
      <div className="flex h-[611px] shrink-0">
        <ToolPanel />
        <div className="flex-1 min-w-0 flex flex-col">
          <div className="h-[19px] bg-[#343434] flex items-end font-['Liberation_Sans',sans-serif] text-[11px] font-bold shrink-0">
            <div className="w-[201px] h-[19px] bg-[#454545] flex items-center justify-between pl-[9px] pr-[6px] text-[#d8d8d8]">
              <span className="whitespace-nowrap">*Aufbau_Template.indd @ 59 %</span>
              <span className="text-[13px] text-[#ddd] leading-none">×</span>
            </div>
            <div className="w-[191px] h-[19px] flex items-center justify-between pl-[10px] pr-[6px] text-[#8a8a8a] border-r border-r-[#2a2a2a]">
              <span className="whitespace-nowrap">Layoutvorschlag.indd @ 59 %</span>
              <span className="text-[13px] text-[#ddd] leading-none">×</span>
            </div>
          </div>
          <div className="h-[15px] flex shrink-0 bg-[#202020]">
            <svg width="15" height="15" className="block shrink-0">
              <path d="M0 8h15M8 0v15" stroke="#aaa" strokeDasharray="1 1" />
            </svg>
            <RulerH />
          </div>
          <div className="h-[561px] flex shrink-0">
            <RulerV />
            <div className="flex-1 min-w-0 bg-[#646464] pl-[176px] pt-[7px] overflow-hidden">
              <Spread />
            </div>
            <div className="w-[16px] bg-[#3a3a3a] flex flex-col justify-end items-center pb-[3px] shrink-0">
              <span className="w-0 h-0 border-x-[5px] border-x-transparent border-t-[6px] border-t-[#ddd]" />
            </div>
          </div>
          <StatusBar />
        </div>
        <Dock />
      </div>
      <div className="flex-1 bg-[#3e3e3e] border-t border-t-[#222]" />
      <PagesPanel />

      {/* mouse cursor */}
      <svg width="14" height="20" viewBox="0 0 14 20" className="absolute left-[175px] top-[243px]">
        <path d="M1 1v15l4-3.5 2.5 6 2.5-1-2.5-6H13z" fill="#000" stroke="#222" strokeWidth=".6" />
      </svg>

      {/* watermark */}
      <svg width="40" height="36" viewBox="0 0 40 36" fill="none" stroke="#b5b5b5" strokeWidth="2" className="absolute left-[31px] top-[669px] opacity-80">
        <path d="M3 4c6-5 15 3 18 12 1 5-1 14-4 16-3 1-9 2-11-1 0-4 6-8 11-8M36 3c-7 2-13 9-15 17-1 5 1 11 4 11 5-3 11-14 11-28z" />
      </svg>
      <span className="absolute left-[64px] top-[692px] text-[12.5px] leading-none font-bold text-[#b9b9b9] font-['Liberation_Sans',sans-serif] whitespace-nowrap">PSD-Tutorials.de</span>
    </div>
  );
}
